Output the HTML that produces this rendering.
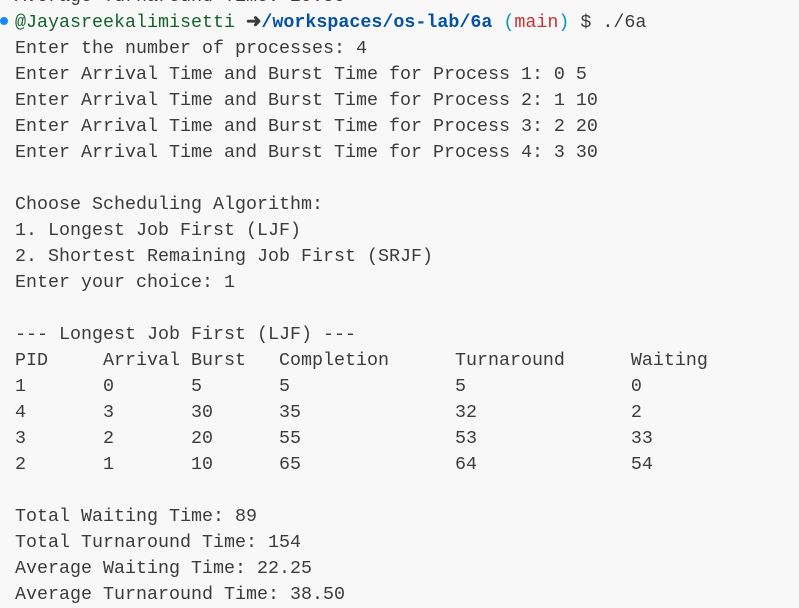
<!DOCTYPE html>
<html><head><meta charset="utf-8"><style>
html,body{margin:0;padding:0;background:#f8f8f8;width:799px;height:604px;overflow:hidden}
pre{margin:0;position:absolute;left:15px;top:-16px;font-family:"Liberation Mono",monospace;font-size:18.33px;line-height:26px;color:#3b3b3b}
.g{color:#116329}.b{color:#0451a5;font-weight:bold}.t{color:#0598bc}.r{color:#cd3131}
.dot{position:absolute;left:0;top:17px;width:8px;height:8px;border-radius:50%;background:#1a85ff}
</style></head><body>
<div class="dot"></div>
<pre>Average Turnaround Time: 29.50
<span class="g">@Jayasreekalimisetti</span> <b>➜</b><span class="b">/workspaces/os-lab/6a</span> <span class="t">(</span><span class="r">main</span><span class="t">)</span> $ ./6a
Enter the number of processes: 4
Enter Arrival Time and Burst Time for Process 1: 0 5
Enter Arrival Time and Burst Time for Process 2: 1 10
Enter Arrival Time and Burst Time for Process 3: 2 20
Enter Arrival Time and Burst Time for Process 4: 3 30

Choose Scheduling Algorithm:
1. Longest Job First (LJF)
2. Shortest Remaining Job First (SRJF)
Enter your choice: 1

--- Longest Job First (LJF) ---
PID     Arrival Burst   Completion      Turnaround      Waiting
1       0       5       5               5               0
4       3       30      35              32              2
3       2       20      55              53              33
2       1       10      65              64              54

Total Waiting Time: 89
Total Turnaround Time: 154
Average Waiting Time: 22.25
Average Turnaround Time: 38.50</pre>
</body></html>
